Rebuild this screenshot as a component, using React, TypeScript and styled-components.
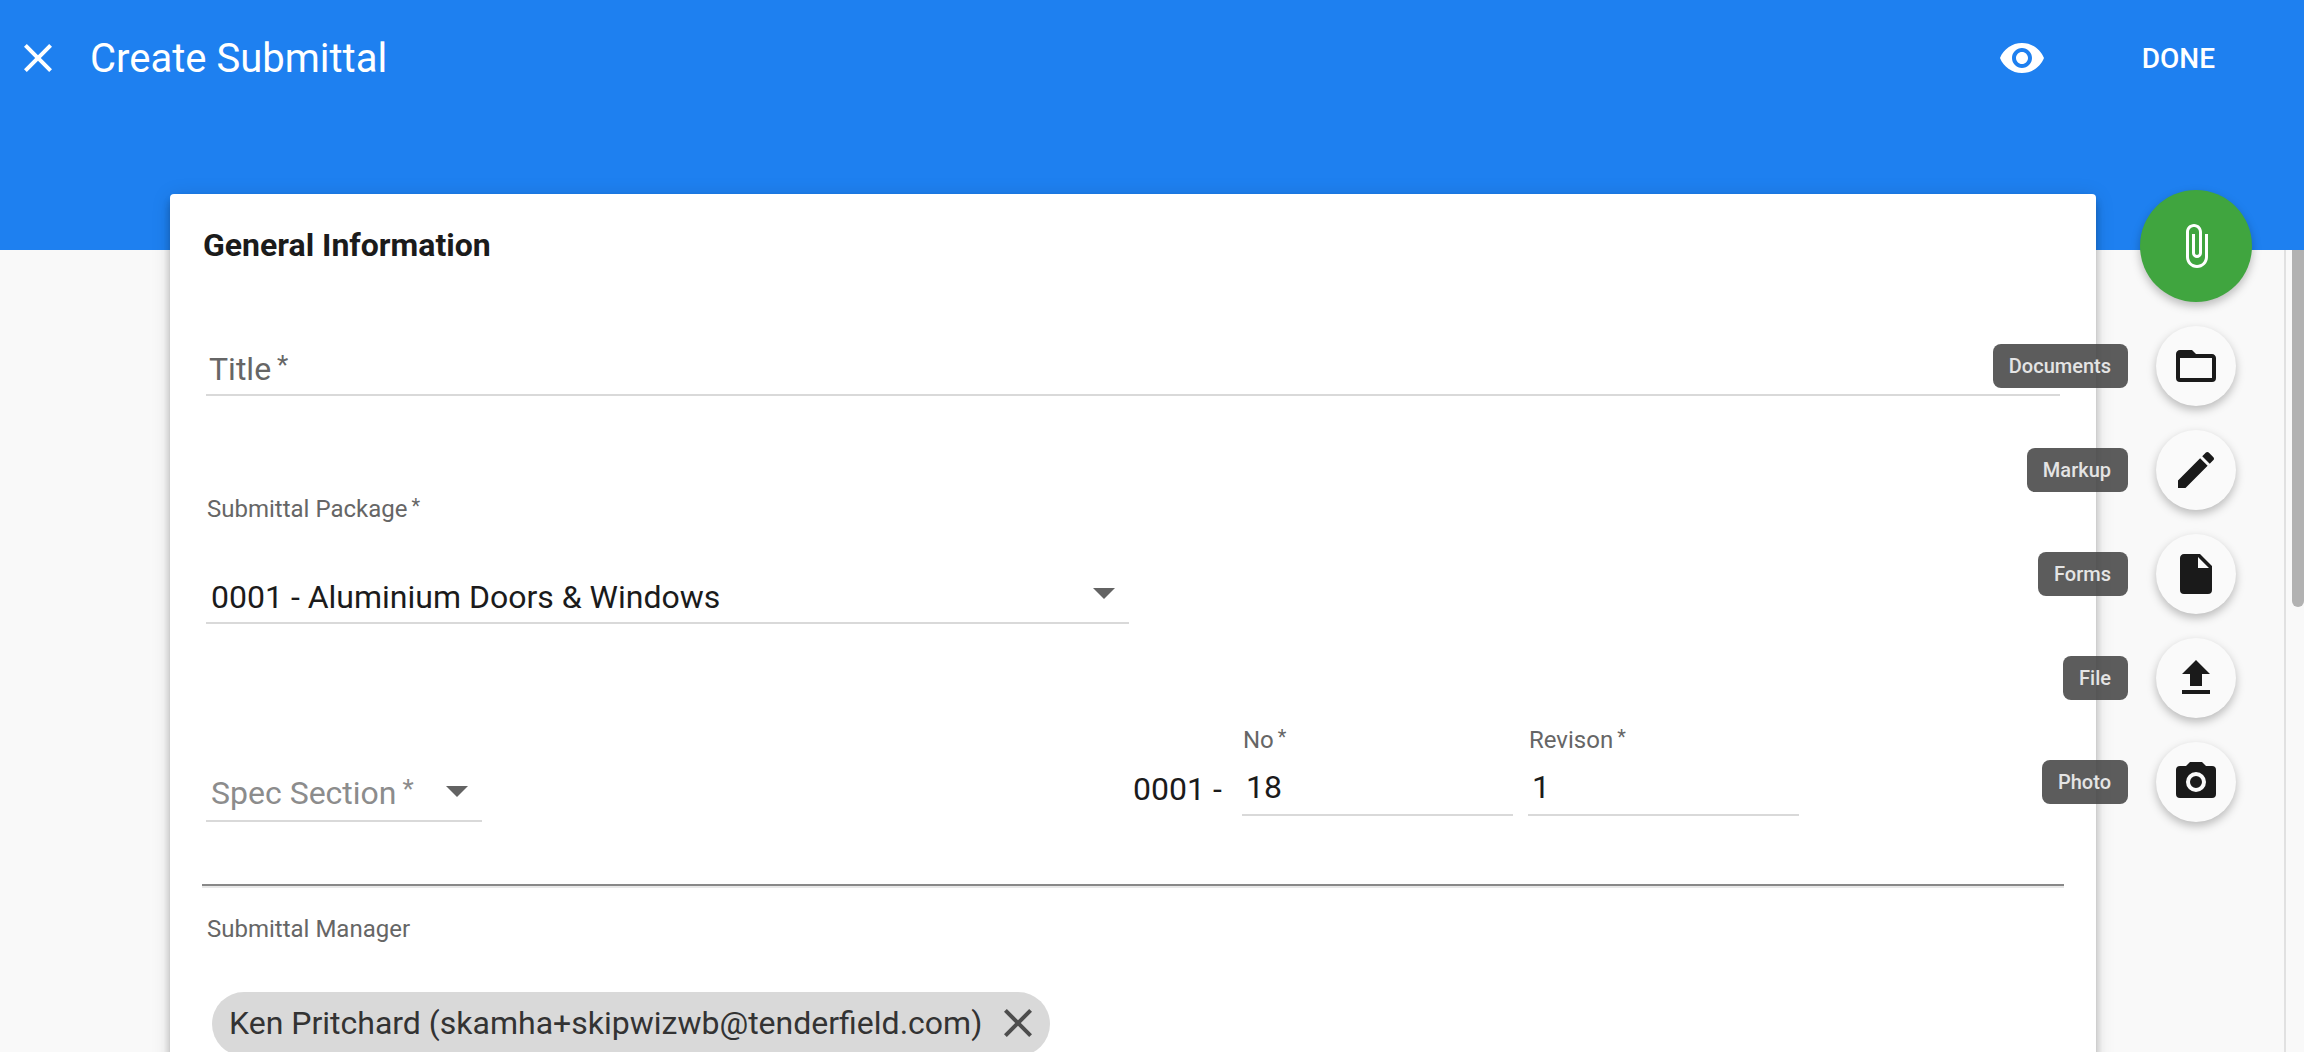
import React, { useState } from "react";
import styled, { createGlobalStyle } from "styled-components";

const GlobalStyle = createGlobalStyle`
  *, *::before, *::after { box-sizing: border-box; }
  body { margin: 0; background: #f9f9f9; }
  body, button, input, select { font-family: Roboto, "Liberation Sans", sans-serif; }
`;

const icons = {
  close:
    "M19 6.41 17.59 5 12 10.59 6.41 5 5 6.41 10.59 12 5 17.59 6.41 19 12 13.41 17.59 19 19 17.59 13.41 12z",
  eye: "M12 4.5C7 4.5 2.73 7.61 1 12c1.73 4.39 6 7.5 11 7.5s9.27-3.11 11-7.5c-1.73-4.39-6-7.5-11-7.5zM12 17c-2.76 0-5-2.24-5-5s2.24-5 5-5 5 2.24 5 5-2.24 5-5 5zm0-8c-1.66 0-3 1.34-3 3s1.34 3 3 3 3-1.34 3-3-1.34-3-3-3z",
  clip: "M16.5 6v11.5c0 2.21-1.79 4-4 4s-4-1.79-4-4V5c0-1.38 1.12-2.5 2.5-2.5s2.5 1.12 2.5 2.5v10.5c0 .55-.45 1-1 1s-1-.45-1-1V6H10v9.5c0 1.38 1.12 2.5 2.5 2.5s2.5-1.12 2.5-2.5V5c0-2.21-1.79-4-4-4S7 2.79 7 5v12.5c0 3.04 2.46 5.5 5.5 5.5s5.5-2.46 5.5-5.5V6h-1.5z",
  folder:
    "M20,18H4V8H20M20,6H12L10,4H4C2.89,4 2,4.89 2,6V18A2,2 0 0,0 4,20H20A2,2 0 0,0 22,18V8C22,6.89 21.1,6 20,6Z",
  pencil:
    "M20.71,7.04C21.1,6.65 21.1,6 20.71,5.63L18.37,3.29C18,2.9 17.35,2.9 16.96,3.29L15.12,5.12L18.87,8.87M3,17.25V21H6.75L17.81,9.93L14.06,6.18L3,17.25Z",
  file: "M13,9V3.5L18.5,9M6,2C4.89,2 4,2.89 4,4V20A2,2 0 0,0 6,22H18A2,2 0 0,0 20,20V8L14,2H6Z",
  upload: "M9,16V10H5L12,3L19,10H15V16H9M5,20V18H19V20H5Z",
  camera:
    "M4,4H7L9,2H15L17,4H20A2,2 0 0,1 22,6V18A2,2 0 0,1 20,20H4A2,2 0 0,1 2,18V6A2,2 0 0,1 4,4M12,7A5,5 0 0,0 7,12A5,5 0 0,0 12,17A5,5 0 0,0 17,12A5,5 0 0,0 12,7M12,9A3,3 0 0,1 15,12A3,3 0 0,1 12,15A3,3 0 0,1 9,12A3,3 0 0,1 12,9Z",
};

type IconName = keyof typeof icons;

const Svg = styled.svg`
  display: block;
  flex: none;
  width: 48px;
  height: 48px;
  fill: currentColor;
`;

const Icon = ({ name }: { name: IconName }) => (
  <Svg viewBox="0 0 24 24" aria-hidden="true">
    <path d={icons[name]} />
  </Svg>
);

const Page = styled.div`
  display: flex;
  flex-direction: column;
  height: 100vh;
  overflow: hidden;
  color: #1b1b1b;
`;

const Header = styled.header`
  flex: none;
  height: 250px;
  background: #1e80f0;
  color: #fff;
`;

const Toolbar = styled.div`
  display: flex;
  align-items: center;
  height: 116px;
  padding: 0 89px 0 14px;
`;

const PlainButton = styled.button`
  display: flex;
  align-items: center;
  padding: 0;
  border: 0;
  background: none;
  color: inherit;
  cursor: pointer;
`;

const PageTitle = styled.h1`
  flex: 1;
  margin: 0 0 0 28px;
  padding-top: 2px;
  font-size: 40px;
  line-height: 48px;
  font-weight: 400;
`;

const DoneButton = styled(PlainButton)`
  margin-left: 96px;
  padding-top: 2px;
  font-size: 28px;
  line-height: 34px;
  font-weight: 500;
`;

const Body = styled.div`
  flex: 1;
  min-height: 0;
  display: flex;
`;

const Main = styled.main`
  flex: 1;
  min-width: 0;
  margin-top: -56px;
  padding-left: 170px;
`;

const Card = styled.form`
  padding: 32px;
  border-radius: 4px;
  background: #fff;
  box-shadow: 0 4px 8px -2px rgba(0, 0, 0, 0.2), 0 8px 10px 0 rgba(0, 0, 0, 0.14),
    0 2px 20px 0 rgba(0, 0, 0, 0.12);
`;

const SectionTitle = styled.h2`
  margin: 0;
  padding-left: 1px;
  font-size: 32px;
  line-height: 38px;
  font-weight: 700;
`;

const Row = styled.div<{ $gap: number }>`
  display: grid;
  grid-template-columns: 1fr 1fr;
  align-items: start;
  margin-top: ${(p) => p.$gap}px;
`;

const Cell = styled.div<{ $wide?: boolean }>`
  grid-column: ${(p) => (p.$wide ? "1 / -1" : "auto")};
  padding: 0 4px;
`;

const Label = styled.label`
  display: block;
  padding-left: 1px;
  font-size: 24px;
  line-height: 28px;
  color: #666;
`;

const Star = styled.span<{ $small?: boolean }>`
  margin-left: ${(p) => (p.$small ? 4 : 6)}px;
  font-size: ${(p) => (p.$small ? 20 : 26)}px;
  line-height: ${(p) => (p.$small ? 22 : 30)}px;
  vertical-align: top;
`;

const Control = styled.div<{ $gap?: number; $width?: number }>`
  position: relative;
  margin-top: ${(p) => p.$gap ?? 0}px;
  width: ${(p) => (p.$width ? `${p.$width}px` : "auto")};
`;

const Placeholder = styled.label<{ $muted?: boolean }>`
  position: absolute;
  left: ${(p) => (p.$muted ? 5 : 3)}px;
  bottom: ${(p) => (p.$muted ? 10 : 8)}px;
  font-size: 32px;
  line-height: 38px;
  color: ${(p) => (p.$muted ? "#8c8c8c" : "#666")};
  pointer-events: none;
`;

const TextInput = styled.input`
  display: block;
  width: 100%;
  height: 62px;
  padding: 14px 4px 8px;
  border: 0;
  border-bottom: 2px solid #d9d9d9;
  border-radius: 0;
  outline: 0;
  background: none;
  color: inherit;
  font-size: 32px;
  line-height: 38px;
`;

const SelectInput = styled.select`
  display: block;
  width: 100%;
  height: 62px;
  padding: 16px 60px 6px 5px;
  border: 0;
  border-bottom: 2px solid #d9d9d9;
  border-radius: 0;
  outline: 0;
  appearance: none;
  background: none;
  color: inherit;
  font-size: 32px;
  line-height: 38px;
`;

const Arrow = styled.span`
  position: absolute;
  right: 14px;
  bottom: 25px;
  border: solid transparent;
  border-width: 11px 11px 0;
  border-top-color: #636363;
  pointer-events: none;
`;

const NumberGroup = styled.div`
  display: flex;
  align-items: flex-end;
`;

const Prefix = styled.span`
  width: 109px;
  padding-bottom: 8px;
  font-size: 32px;
  line-height: 38px;
`;

const NumberField = styled.div`
  width: 271px;
  margin-right: 15px;
`;

const Offset = styled.div`
  padding-top: 34px;
`;

const Divider = styled.hr`
  height: 4px;
  margin: 62px 0 27px;
  border: solid;
  border-width: 2px 0;
  border-color: #888 transparent #e8e8e8;
`;

const Chip = styled.div`
  display: inline-flex;
  align-items: center;
  gap: 12px;
  height: 64px;
  margin: 49px 0 64px 6px;
  padding: 0 8px 2px 17px;
  border-radius: 32px;
  background: #d9d9d9;
  color: #333;
  font-size: 32px;
  line-height: 38px;
`;

const ChipRemove = styled(PlainButton)`
  color: #4d4d4d;
`;

const Dial = styled.nav`
  display: flex;
  flex-direction: column;
  align-items: center;
  gap: 24px;
  width: 188px;
  margin-top: -60px;
  padding-left: 12px;
`;

const RoundButton = styled.button<{ $main?: boolean }>`
  position: relative;
  display: flex;
  align-items: center;
  justify-content: center;
  flex: none;
  width: ${(p) => (p.$main ? 112 : 80)}px;
  height: ${(p) => (p.$main ? 112 : 80)}px;
  padding: 0;
  border: 0;
  border-radius: 50%;
  background: ${(p) => (p.$main ? "#40a53f" : "#fafafa")};
  color: ${(p) => (p.$main ? "#fff" : "#1a1a1a")};
  box-shadow: 0 4px 10px 0 rgba(0, 0, 0, 0.26);
  cursor: pointer;
`;

const Tip = styled.span`
  position: absolute;
  right: 108px;
  top: 18px;
  padding: 0 17px 0 16px;
  border-radius: 8px;
  background: rgba(70, 70, 70, 0.88);
  color: #e4e4e4;
  font-size: 20px;
  line-height: 44px;
  font-weight: 500;
  white-space: nowrap;
`;

const ScrollTrack = styled.div`
  display: flex;
  justify-content: flex-end;
  width: 20px;
  border-left: 2px solid #e1e1e1;
`;

const ScrollThumb = styled.div`
  width: 12px;
  height: 357px;
  border-radius: 0 0 8px 8px;
  background: #b2b2b2;
`;

const actions: { label: string; icon: IconName }[] = [
  { label: "Documents", icon: "folder" },
  { label: "Markup", icon: "pencil" },
  { label: "Forms", icon: "file" },
  { label: "File", icon: "upload" },
  { label: "Photo", icon: "camera" },
];

export default function App() {
  const [title, setTitle] = useState("");
  const [number, setNumber] = useState("18");
  const [revision, setRevision] = useState("1");

  return (
    <Page>
      <GlobalStyle />
      <Header>
        <Toolbar>
          <PlainButton type="button" aria-label="Close">
            <Icon name="close" />
          </PlainButton>
          <PageTitle>Create Submittal</PageTitle>
          <PlainButton type="button" aria-label="Preview">
            <Icon name="eye" />
          </PlainButton>
          <DoneButton type="button">DONE</DoneButton>
        </Toolbar>
      </Header>
      <Body>
        <Main>
          <Card onSubmit={(e) => e.preventDefault()}>
            <SectionTitle>General Information</SectionTitle>

            <Row $gap={70}>
              <Cell $wide>
                <Control>
                  <TextInput id="title" value={title} onChange={(e) => setTitle(e.target.value)} />
                  {title === "" && (
                    <Placeholder htmlFor="title">
                      Title<Star>*</Star>
                    </Placeholder>
                  )}
                </Control>
              </Cell>
            </Row>

            <Row $gap={99}>
              <Cell>
                <Label htmlFor="package">
                  Submittal Package<Star $small>*</Star>
                </Label>
                <Control $gap={39}>
                  <SelectInput id="package">
                    <option>0001 - Aluminium Doors &amp; Windows</option>
                  </SelectInput>
                  <Arrow />
                </Control>
              </Cell>
            </Row>

            <Row $gap={102}>
              <Cell>
                <Offset>
                  <Control $width={276}>
                    <SelectInput id="spec">
                      <option value=""></option>
                    </SelectInput>
                    <Placeholder htmlFor="spec" $muted>
                      Spec Section<Star>*</Star>
                    </Placeholder>
                    <Arrow />
                  </Control>
                </Offset>
              </Cell>
              <NumberGroup>
                <Prefix>0001 -</Prefix>
                <NumberField>
                  <Label htmlFor="number">
                    No<Star $small>*</Star>
                  </Label>
                  <TextInput id="number" value={number} onChange={(e) => setNumber(e.target.value)} />
                </NumberField>
                <NumberField>
                  <Label htmlFor="revision">
                    Revison<Star $small>*</Star>
                  </Label>
                  <TextInput id="revision" value={revision} onChange={(e) => setRevision(e.target.value)} />
                </NumberField>
              </NumberGroup>
            </Row>

            <Divider />

            <Cell>
              <Label as="div">Submittal Manager</Label>
              <Chip>
                Ken Pritchard (skamha+skipwizwb@tenderfield.com)
                <ChipRemove type="button" aria-label="Remove Ken Pritchard">
                  <Icon name="close" />
                </ChipRemove>
              </Chip>
            </Cell>
          </Card>
        </Main>
        <Dial aria-label="Attachments">
          <RoundButton type="button" $main aria-label="Attach">
            <Icon name="clip" />
          </RoundButton>
          {actions.map((a) => (
            <RoundButton key={a.label} type="button">
              <Icon name={a.icon} />
              <Tip>{a.label}</Tip>
            </RoundButton>
          ))}
        </Dial>
        <ScrollTrack>
          <ScrollThumb />
        </ScrollTrack>
      </Body>
    </Page>
  );
}
